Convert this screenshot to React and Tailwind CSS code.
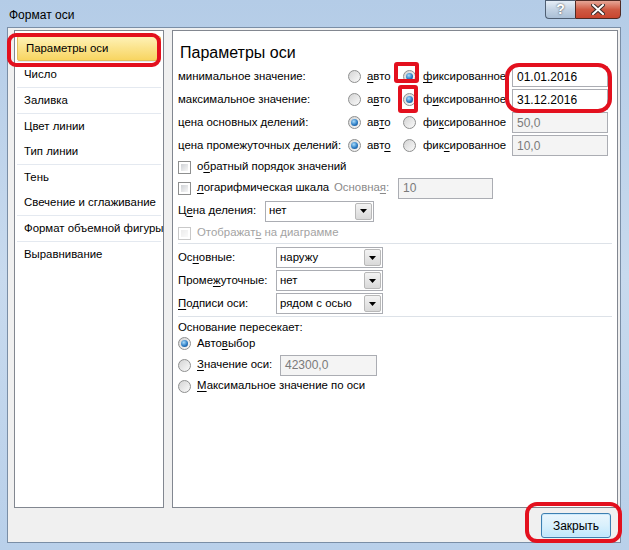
import React from 'react';

const Label = ({ text, className = '' }) => {
  const i = text.indexOf('&');
  if (i < 0) return <span className={`whitespace-nowrap ${className}`}>{text}</span>;
  return (
    <span className={`whitespace-nowrap ${className}`}>
      {text.slice(0, i)}
      <span className="underline underline-offset-[2px]">{text[i + 1]}</span>
      {text.slice(i + 2)}
    </span>
  );
};

const Radio = ({ checked }) => (
  <span className="w-[13px] h-[13px] shrink-0 rounded-full border border-[#8e8f8f] bg-gradient-to-br from-[#d4d4d4] to-[#fafafa] flex items-center justify-center">
    {checked && (
      <span className="w-[7px] h-[7px] rounded-full bg-[radial-gradient(circle_at_40%_35%,#a9dcfb,#2c7cc4_55%,#0f3f7a)]" />
    )}
  </span>
);

const Checkbox = ({ disabled }) => (
  <span
    className={`w-[13px] h-[13px] shrink-0 border p-[2px] bg-white ${
      disabled ? 'border-[#c9c9c9]' : 'border-[#8e8f8f]'
    }`}
  >
    <span
      className={`block w-full h-full bg-gradient-to-br ${
        disabled ? 'from-[#ececec] to-[#fafafa]' : 'from-[#cfd2d6] to-[#f7f7f7]'
      }`}
    />
  </span>
);

const Input = ({ value, disabled, className = '' }) => (
  <div
    className={`h-[21px] shrink-0 border border-[#abadb3] pl-[4px] flex items-center text-[12px] ${
      disabled ? 'bg-[#f4f4f4] text-[#7a7a7a]' : 'bg-white text-black'
    } ${className}`}
  >
    {value}
  </div>
);

const Select = ({ value, className = '' }) => (
  <div className={`h-[21px] shrink-0 border border-[#abadb3] bg-white flex ${className}`}>
    <span className="flex-1 pl-[3px] flex items-center whitespace-nowrap">{value}</span>
    <span className="w-[17px] my-[1px] mr-[1px] border border-[#b8b8b8] rounded-[2px] bg-gradient-to-b from-[#f3f3f3] to-[#d9d9d9] flex items-center justify-center">
      <svg width="7" height="4" viewBox="0 0 7 4">
        <polygon points="0,0 7,0 3.5,4" fill="#000" />
      </svg>
    </span>
  </div>
);

const AxisRow = ({ label, auto, fixed, autoOn, value, disabled }) => (
  <div className="h-[23px] flex items-center">
    <Label text={label} className="w-[170px] shrink-0" />
    <span className="w-[55px] shrink-0 flex items-center gap-[6px]">
      <Radio checked={autoOn} />
      <Label text={auto} />
    </span>
    <span className="w-[109px] shrink-0 flex items-center gap-[7px]">
      <Radio checked={!autoOn} />
      <Label text={fixed} />
    </span>
    <Input value={value} disabled={disabled} className="w-[96px]" />
  </div>
);

const navItems = [
  { name: 'Параметры оси', sep: true, active: true },
  { name: 'Число', sep: true },
  { name: 'Заливка', sep: true },
  { name: 'Цвет линии' },
  { name: 'Тип линии', sep: true },
  { name: 'Тень' },
  { name: 'Свечение и сглаживание', sep: true },
  { name: 'Формат объемной фигуры', sep: true },
  { name: 'Выравнивание' },
];

export default function App() {
  return (
    <div className="relative w-[629px] h-[550px] overflow-hidden flex flex-col bg-gradient-to-b from-[#b4cce7] via-[#c8daee] to-[#b9d0ea] font-['Liberation_Sans',Arial,sans-serif] text-[11.4px] text-black">
      {/* title bar */}
      <div className="h-[27px] flex items-start justify-between shrink-0">
        <span className="pl-[9px] pt-[8px] leading-[14px] text-[12px]">Формат оси</span>
        <div className="flex mr-[8px]">
          <span className="w-[30px] h-[19px] border border-[#4f5f73] border-r-0 rounded-bl-[4px] bg-gradient-to-b from-[#e6eef7] via-[#c3d3e4] to-[#aabfd6] flex items-center justify-center text-[14px] font-bold text-white [text-shadow:0_0_2px_#333]">
            ?
          </span>
          <span className="w-[46px] h-[19px] border border-[#4f2a24] rounded-br-[4px] bg-gradient-to-b from-[#e5a596] via-[#cf5a43] to-[#c8452f] flex items-center justify-center">
            <svg width="14" height="11" viewBox="0 0 14 11">
              <path d="M2 1 L12 10 M12 1 L2 10" stroke="#3a2a28" strokeWidth="4" strokeLinecap="square" />
              <path d="M2 1 L12 10 M12 1 L2 10" stroke="#fff" strokeWidth="2" strokeLinecap="square" />
            </svg>
          </span>
        </div>
      </div>

      {/* client area */}
      <div className="flex-1 ml-[7px] mr-[8px] mb-[7px] border border-[#7a8ea6] bg-[#f0f0f0] flex flex-col">
        <div className="flex gap-[8px] pl-[6px] pr-[3px] pt-[2px]">
          {/* left list */}
          <div className="w-[150px] h-[478px] shrink-0 border border-[#828790] bg-white pt-[5px] px-[1px]">
            {navItems.map((item) => (
              <div key={item.name}>
                <div
                  className={`h-[25px] flex items-center pl-[8px] whitespace-nowrap ${
                    item.active
                      ? 'mx-[1px] border border-[#e1bf5d] rounded-[2px] bg-gradient-to-b from-[#fef1b5] via-[#fbe38a] to-[#f8d560]'
                      : ''
                  }`}
                >
                  {item.name}
                </div>
                {item.sep && <div className="h-[1px] mx-[1px] bg-[#e4e9f0]" />}
              </div>
            ))}
          </div>

          {/* right panel */}
          <div className="w-[446px] h-[478px] shrink-0 border border-[#828790] bg-white pl-[5px] pt-[12px]">
            <div className="text-[16px] leading-[20px] pl-[2px] mb-[2px]">Параметры оси</div>

            <AxisRow label="минимальное значение:" auto="&авто" fixed="&фиксированное" value="01.01.2016" />
            <AxisRow label="максимальное значение:" auto="а&вто" fixed="ф&иксированное" value="31.12.2016" />
            <AxisRow label="цена основных делений:" auto="ав&то" fixed="фи&ксированное" value="50,0" autoOn disabled />
            <AxisRow label="цена промежуточных делений:" auto="авт&о" fixed="фик&сированное" value="10,0" autoOn disabled />

            <div className="h-[20px] flex items-center gap-[6px]">
              <Checkbox />
              <Label text="о&братный порядок значений" />
            </div>
            <div className="h-[22px] flex items-center">
              <Checkbox />
              <Label text="&логарифмическая шкала" className="ml-[6px] w-[137px] shrink-0" />
              <Label text="Основна&я:" className="w-[64px] shrink-0 text-[#8a8a8a]" />
              <Input value="10" disabled className="w-[95px] h-[20px]" />
            </div>
            <div className="h-[24px] flex items-center">
              <Label text="Ц&ена деления:" className="w-[87px] shrink-0" />
              <Select value="нет" className="w-[109px]" />
            </div>
            <div className="h-[20px] flex items-center gap-[6px]">
              <Checkbox disabled />
              <Label text="Отображат&ь на диаграмме" className="text-[#a3a3a3]" />
            </div>

            <div className="h-[1px] bg-[#dde2e8] mb-[2px] mr-[5px]" />

            <div className="h-[23px] flex items-center">
              <Label text="Ос&новные:" className="w-[98px] shrink-0" />
              <Select value="наружу" className="w-[107px]" />
            </div>
            <div className="h-[23px] flex items-center">
              <Label text="Проме&жуточные:" className="w-[98px] shrink-0" />
              <Select value="нет" className="w-[107px]" />
            </div>
            <div className="h-[23px] flex items-center">
              <Label text="&Подписи оси:" className="w-[98px] shrink-0" />
              <Select value="рядом с осью" className="w-[107px]" />
            </div>

            <div className="h-[1px] bg-[#dde2e8] mt-[1px] mr-[5px]" />

            <div className="h-[17px] flex items-center mt-[2px] whitespace-nowrap">Основание пересекает:</div>
            <div className="h-[15px] flex items-center gap-[6px]">
              <Radio checked />
              <Label text="Авто&выбор" />
            </div>
            <div className="h-[22px] flex items-center mt-[3px]">
              <Radio />
              <Label text="&Значение оси:" className="ml-[6px] w-[83px] shrink-0" />
              <Input value="42300,0" disabled className="w-[97px]" />
            </div>
            <div className="h-[20px] flex items-center gap-[6px]">
              <Radio />
              <Label text="&Максимальное значение по оси" />
            </div>
          </div>
        </div>

        {/* footer */}
        <div className="flex-1 flex items-start justify-end pr-[9px] pt-[5px]">
          <button className="w-[70px] h-[25px] rounded-[3px] border border-[#3c7fb1] bg-gradient-to-b from-[#eaf6fd] via-[#d9f0fc] to-[#bee6fd] shadow-[inset_0_0_0_1px_#cdeafc] text-[12px] text-black">
            Закрыть
          </button>
        </div>
      </div>

      {/* red annotations */}
      <div className="absolute left-[7px] top-[33px] w-[154px] h-[34px] border-[4px] border-[#e3101e] rounded-[9px]" />
      <div className="absolute left-[394px] top-[62px] w-[25px] h-[21px] border-[4px] border-[#e3101e] rounded-[3px]" />
      <div className="absolute left-[398px] top-[85px] w-[20px] h-[28px] border-[4px] border-[#e3101e] rounded-[3px]" />
      <div className="absolute left-[505px] top-[63px] w-[107px] h-[50px] border-[4px] border-[#e3101e] rounded-[14px]" />
      <div className="absolute left-[525px] top-[502px] w-[97px] h-[41px] border-[4px] border-[#e3101e] rounded-[12px]" />
    </div>
  );
}
